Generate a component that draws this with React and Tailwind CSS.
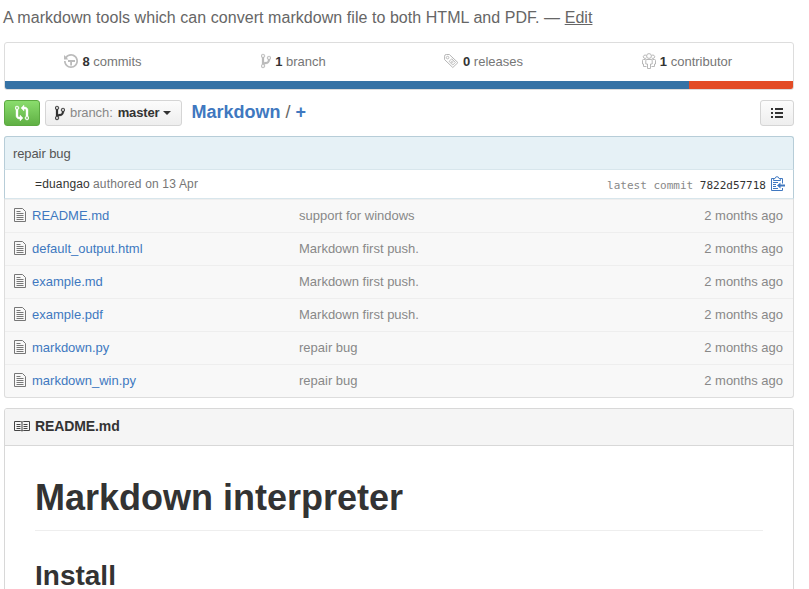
const BRANCH =
  "M10 5c0-1.11-.89-2-2-2a1.993 1.993 0 0 0-1 3.72v.3c-.02.52-.23.98-.63 1.38-.4.4-.86.61-1.38.63-.83.02-1.48.16-2 .45V4.72a1.993 1.993 0 0 0-1-3.72C.88 1 0 1.89 0 3a2 2 0 0 0 1 1.72v6.56c-.59.35-1 .99-1 1.72 0 1.11.89 2 2 2 1.11 0 2-.89 2-2 0-.53-.2-1-.53-1.36.09-.06.48-.41.59-.47.25-.11.56-.17.94-.17 1.05-.05 1.95-.45 2.75-1.25S8.95 7.77 9 6.73h-.02C9.59 6.37 10 5.73 10 5zM2 1.8c.66 0 1.2.55 1.2 1.2 0 .65-.55 1.2-1.2 1.2C1.35 4.2.8 3.65.8 3c0-.65.55-1.2 1.2-1.2zm0 12.41c-.66 0-1.2-.55-1.2-1.2 0-.65.55-1.2 1.2-1.2.65 0 1.2.55 1.2 1.2 0 .65-.55 1.2-1.2 1.2zm6-8c-.66 0-1.2-.55-1.2-1.2 0-.65.55-1.2 1.2-1.2.65 0 1.2.55 1.2 1.2 0 .65-.55 1.2-1.2 1.2z";
const COMPARE =
  "M5 12H4c-.27-.02-.48-.11-.69-.31-.21-.2-.3-.42-.31-.69V4.72A1.993 1.993 0 0 0 2 1a1.993 1.993 0 0 0-1 3.72V11c.03.78.34 1.47.94 2.06.6.59 1.28.91 2.06.94h1v2l3-3-3-3v2zM2 1.8c.66 0 1.2.55 1.2 1.2 0 .65-.55 1.2-1.2 1.2C1.35 4.2.8 3.65.8 3c0-.65.55-1.2 1.2-1.2zm11 9.48V5c-.03-.78-.34-1.47-.94-2.06-.6-.59-1.28-.91-2.06-.94H9V0L6 3l3 3V4h1c.27.02.48.11.69.31.21.2.3.42.31.69v6.28A1.993 1.993 0 0 0 12 15a1.993 1.993 0 0 0 1-3.72zm-1 2.92c-.66 0-1.2-.55-1.2-1.2 0-.65.55-1.2 1.2-1.2.65 0 1.2.55 1.2 1.2 0 .65-.55 1.2-1.2 1.2z";
const HISTORY =
  "M8 12.500H6.200V9H4V7h7v2H8zM7 1C4.810 1 2.870 2.020 1.590 3.590L0 2v4.500h4.500L2.900 4.900C3.700 3.600 5.300 2.700 7 2.700c2.900 0 5.300 2.400 5.300 5.300s-2.400 5.300-5.300 5.300S1.700 10.900 1.700 8H0c0 3.860 3.140 7 7 7s7-3.140 7-7-3.140-7-7-7z";

function BranchIcon({ className }) {
  return (
    <svg viewBox="0 0 10 16" width="10" height="16" fill="currentColor" stroke="currentColor" strokeWidth=".25" className={className}>
      <path d={BRANCH} />
    </svg>
  );
}

function HistoryIcon() {
  return (
    <svg viewBox="0 0 14 16" width="14" height="16" fill="currentColor" className="mt-[-2px] text-[#bbb]">
      <path d={HISTORY} />
    </svg>
  );
}

function TagIcon() {
  return (
    <svg viewBox="0 0 15 16" width="15" height="16" fill="none" stroke="currentColor" className="mt-[-2px] text-[#b5b5b5]">
      <path d="M.6 3.200Q.6 1.500 2.300 1.500h3L13.900 9.600 8.800 14.500.6 6.600z" />
      <circle cx="3.600" cy="4.600" r="1.300" strokeWidth=".9" />
      <path strokeWidth=".9" d="M7.700 5.800 11.400 9.400 8.800 12 5.100 8.400z" />
      <circle cx="8.200" cy="8.900" r=".9" strokeWidth=".7" />
    </svg>
  );
}

function OrganizationIcon() {
  return (
    <svg viewBox="0 0 14 16" width="14" height="16" fill="none" stroke="currentColor" strokeWidth=".9" className="mt-[-2px] text-[#b0b0b0]">
      <circle cx="7" cy="3" r="2.400" />
      <path d="M4.300 4.900A1.700 1.700 0 1 1 4.300 2.600M9.700 4.900A1.700 1.700 0 1 0 9.700 2.600" />
      <path d="M5.500 15.500V11H3.800V7.500Q3.800 6.500 5 6.500h4q1.200 0 1.200 1V11H8.500v4.500z" />
      <path d="M3.600 6.500H1.400q-.9 0-.9 1V11h1v2.500h3M10.400 6.500h2.200q.9 0 .9 1V11h-1v2.500h-3" />
    </svg>
  );
}

function FileIcon() {
  return (
    <svg viewBox="0 0 12 14" width="12" height="14" fill="none" stroke="currentColor" className="mb-[2px] text-[#777]">
      <path d="M.5.5h8l3 3v10H.5zM2.500 3.500h4M2.500 5.500h7M2.500 7.500h7M2.500 9.500h7M2.500 11.500h7" />
    </svg>
  );
}

function BookIcon() {
  return (
    <svg viewBox="0 0 16 11" width="16" height="11" fill="none" stroke="currentColor" className="mb-[2px] text-[#444]">
      <path d="M.5.5h6q1.200 0 1.500.7Q8.300.5 9.500.5h6v9H9.500q-1 0-1.500.7-.5-.7-1.500-.7H.5zM8 1v9M2.500 3.500h4M2.500 5.500h4M2.500 7.500h4M9.500 3.500h4M9.500 5.500h4M9.500 7.500h4" />
    </svg>
  );
}

function ClippyIcon() {
  return (
    <svg viewBox="0 0 14 16" width="14" height="16" fill="none" stroke="currentColor" className="text-[#4078c0]">
      <path d="M11.500 7.500v-5H9M3 2.500H.5v12h11v-2.500" />
      <path d="M2.500 4.500V3.300Q2.700 2.700 4 2.500 4.300.7 6 .7t2 1.800q1.300.2 1.500.8v1.200z" />
      <path fill="currentColor" stroke="none" d="M6 9.500 9.500 6.500v2H14v2H9.500v2zM2 6h5v1H2zM2 8h3v1H2zM2 10h3v1H2zM2 12h5v1H2z" />
    </svg>
  );
}

function Stat({ icon, count, label, className }) {
  return (
    <div className={`flex items-center justify-center ${className}`}>
      {icon}
      <span className="ml-1 whitespace-pre">
        <b className="text-[#333]">{count}</b> {label}
      </span>
    </div>
  );
}

const files = [
  ["README.md", "support for windows"],
  ["default_output.html", "Markdown first push."],
  ["example.md", "Markdown first push."],
  ["example.pdf", "Markdown first push."],
  ["markdown.py", "repair bug"],
  ["markdown_win.py", "repair bug"],
];

export default function App() {
  return (
    <div className="h-[589px] w-[809px] overflow-hidden bg-white pl-1 font-['Liberation_Sans',Arial,sans-serif] text-[13px] leading-5 text-[#767676]">
      <div className="w-[790px]">
        <p className="flex h-[42px] items-start pt-2 text-[16px] tracking-[0.052px] text-[#666]">
          <span className="-ml-px whitespace-pre">A markdown tools which can convert markdown file to both HTML and PDF. — </span>
          <a className="underline">Edit</a>
        </p>

        <section className="h-12 overflow-hidden rounded-[3px] border border-[#ddd]">
          <div className="flex h-[38px]">
            <Stat className="w-[196px]" icon={<HistoryIcon />} count="8" label="commits" />
            <Stat className="w-[185px]" icon={<BranchIcon className="mt-[-2px] text-[#bbb]" />} count="1" label="branch" />
            <Stat className="w-[195px]" icon={<TagIcon />} count="0" label="releases" />
            <Stat className="w-[212px]" icon={<OrganizationIcon />} count="1" label="contributor" />
          </div>
          <div className="flex h-2">
            <div className="w-[684px] bg-[#3572a5]" />
            <div className="flex-1 bg-[#e34c26]" />
          </div>
        </section>

        <div className="mt-[10px] flex h-[26px] items-center">
          <button className="flex h-[26px] w-9 items-center justify-center rounded-[3px] border border-[#5ca941] bg-linear-to-b from-[#8add6d] to-[#60b044] text-white">
            <svg viewBox="0 0 14 16" width="14" height="16" fill="currentColor" stroke="currentColor" strokeWidth=".4">
              <path d={COMPARE} />
            </svg>
          </button>
          <button className="ml-[5px] flex h-[26px] w-[137px] items-center rounded-[3px] border border-[#d5d5d5] bg-linear-to-b from-[#fcfcfc] to-[#eee] pl-[9px] text-[#333]">
            <BranchIcon />
            <span className="ml-[5px] tracking-[-0.1px] text-[#888]">branch:</span>
            <b className="ml-[5px] tracking-[-0.15px]">master</b>
            <span className="ml-1 border-x-4 border-t-4 border-x-transparent border-t-[#333]" />
          </button>
          <div className="mt-[-2px] ml-[9.5px] whitespace-pre text-[18px] leading-[26px] text-[#666]">
            <b className="text-[#4078c0]">Markdown</b> / <b className="text-[#4078c0]">+</b>
          </div>
          <button className="ml-auto flex h-[26px] w-[34px] items-center justify-center rounded-[3px] border border-[#d5d5d5] bg-linear-to-b from-[#fcfcfc] to-[#eee]">
            <svg viewBox="0 0 12 10" width="12" height="10" fill="#333">
              <path d="M0 0h2v2H0zM4 0h8v2H4zM0 4h2v2H0zM4 4h8v2H4zM0 8h2v2H0zM4 8h8v2H4z" />
            </svg>
          </button>
        </div>

        <section className="mt-[10px]">
          <div className="h-[34px] rounded-t-[3px] border border-[#b7cdd8] border-b-[#d8e6ec] bg-[#e6f1f6] pt-[7px] pl-2 tracking-[-0.1px] text-[#555]">
            repair bug
          </div>
          <div className="flex h-[29px] items-center border-x border-b border-[#b7cdd8] border-b-[#d8e6ec] pr-2 pl-[30px] text-[12px]">
            <span className="tracking-[0.15px] text-[#333]">=duangao</span>
            <span className="ml-[3px] tracking-[0.17px]">authored on 13 Apr</span>
            <span className="mt-1 ml-auto whitespace-pre font-['DejaVu_Sans_Mono',monospace] text-[11px] text-[#888]">
              latest commit <span className="text-[#333]">7822d57718</span>
            </span>
            <span className="ml-[5px]">
              <ClippyIcon />
            </span>
          </div>
          <div className="h-[199px] overflow-hidden rounded-b-[3px] border border-t-0 border-[#ddd] bg-[#f8f8f8]">
            {files.map(([name, message]) => (
              <div key={name} className="flex h-[33px] items-center border-t border-[#eee] pr-[10px] pl-[9px] text-[#888]">
                <FileIcon />
                <a className="ml-[6px] w-[267px] text-[#4078c0]">{name}</a>
                <span>{message}</span>
                <span className="ml-auto">2 months ago</span>
              </div>
            ))}
          </div>
        </section>

        <section className="mt-[10px] h-[300px] rounded-[3px] border border-[#d8d8d8]">
          <div className="flex h-[37px] items-center rounded-t-[2px] border-b border-[#d8d8d8] bg-[#f5f5f5] pl-[9px] text-[14px] font-bold text-[#333]">
            <BookIcon />
            <span className="mb-[2px] ml-[5px] tracking-[-0.1px]">README.md</span>
          </div>
          <article className="px-[30px] font-bold text-[#333]">
            <h1 className="h-[85px] border-b border-[#eee] pt-[30px] text-[36px] leading-[43px]">Markdown interpreter</h1>
            <h2 className="mt-7 text-[28px] leading-[34px]">Install</h2>
          </article>
        </section>
      </div>
    </div>
  );
}
